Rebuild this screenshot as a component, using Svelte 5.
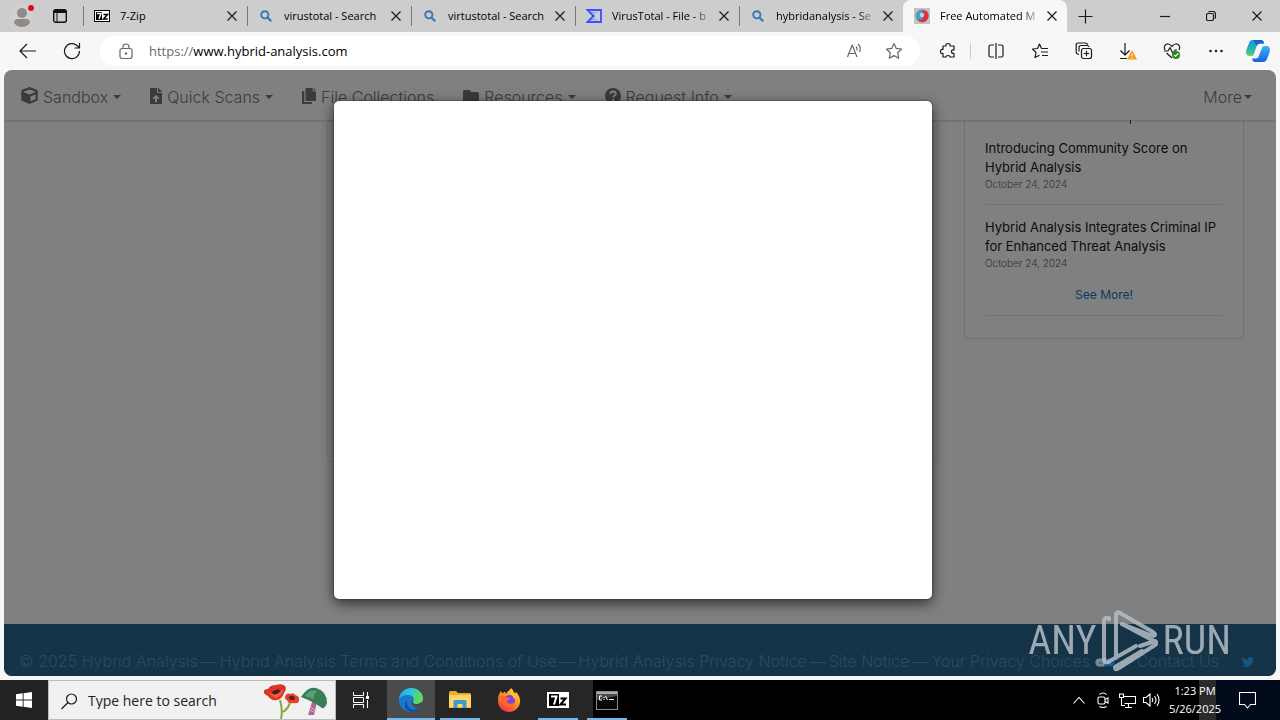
<script>
  const tabs = [
    { icon: 'zip', title: '7-Zip' },
    { icon: 'search', title: 'virustotal - Search' },
    { icon: 'search', title: 'virtustotal - Search' },
    { icon: 'vt', title: 'VirusTotal - File - b', fade: true },
    { icon: 'search', title: 'hybridanalysis - Se', fade: true },
    { icon: 'ha', title: 'Free Automated M', fade: true, active: true }
  ];

  const menu = [
    { icon: 'cube', label: 'Sandbox', caret: true },
    { icon: 'upload', label: 'Quick Scans', caret: true },
    { icon: 'copy', label: 'File Collections' },
    { icon: 'folder', label: 'Resources', caret: true },
    { icon: 'help', label: 'Request Info', caret: true }
  ];

  const posts = [
    { title: 'Introducing Community Score on Hybrid Analysis', date: 'October 24, 2024' },
    { title: 'Hybrid Analysis Integrates Criminal IP for Enhanced Threat Analysis', date: 'October 24, 2024' }
  ];

  const links = [
    'Hybrid Analysis Terms and Conditions of Use',
    'Hybrid Analysis Privacy Notice',
    'Site Notice'
  ];

  const tools = [
    { icon: 'split', label: 'Split screen' },
    { icon: 'favs', label: 'Favorites' },
    { icon: 'collect', label: 'Collections' },
    { icon: 'download', label: 'Downloads' },
    { icon: 'heart', label: 'Browser essentials' },
    { icon: 'dots', label: 'Settings and more' },
    { icon: 'copilot', label: 'Copilot' }
  ];

  const apps = [
    { icon: 'edge', label: 'Microsoft Edge', state: 'current' },
    { icon: 'explorer', label: 'File Explorer', state: 'open' },
    { icon: 'firefox', label: 'Firefox', state: '' },
    { icon: 'seven', label: '7-Zip', state: 'open' },
    { icon: 'cmd', label: 'Command Prompt', state: 'open' }
  ];

  let query = $state('');
  let address = $state('www.hybrid-analysis.com');
</script>

{#snippet glyph(name)}
  {#if name === 'zip'}
    <svg width="16" height="12" viewBox="0 0 16 12"><rect width="16" height="12" fill="#000" /><rect x="1" y="1" width="14" height="10" fill="#fff" /><rect x="2" y="2" width="6" height="8" fill="#000" /><path d="M3 3.500h4L5 9" fill="none" stroke="#fff" stroke-width="1.400" /><path d="M9.500 4.500h4l-4 4.500h4.200" fill="none" stroke="#000" stroke-width="1.500" /></svg>
  {:else if name === 'search'}
    <svg width="14" height="14" viewBox="0 0 14 14" fill="none" stroke="#3b76b4" stroke-width="1.900"><circle cx="5.800" cy="5.800" r="3.600" /><path d="M8.500 8.500l3.700 3.700" stroke-width="2.200" /></svg>
  {:else if name === 'vt'}
    <svg width="16" height="16" viewBox="0 0 16 16" fill="none" stroke="#394eff" stroke-width="1.800"><path d="M1.500 2H15v12H1.500L7.500 8z" /><path d="M5 4.500h6M5 11.500h6M5.500 5 9 8l-3.500 3" stroke-width="1" opacity=".4" /></svg>
  {:else if name === 'ha'}
    <svg width="16" height="16" viewBox="0 0 16 16"><rect width="16" height="16" fill="#c6c2c2" /><circle cx="8" cy="8" r="6.500" fill="#5299c4" /><path d="M8 2.500c5-1 7.500 3 6.300 7C12.500 15 6 15.500 4 11.500c4 1.500 7-1 4-9z" fill="#e52d3c" /><circle cx="8" cy="7" r="2.200" fill="#a8dcf4" /></svg>
  {:else if name === 'cube'}
    <svg width="17" height="17" viewBox="0 0 512 512" fill="currentColor"><path d="M239 6 32 84c-14 5-24 19-24 34v264c0 15 9 28 22 34l208 90c11 5 25 5 36 0l208-90c13-6 22-19 22-34V118c0-15-10-29-24-34L273 6c-11-4-23-4-34 0zm17 68 184 69v8l-184 78L72 151v-8zm32 354V286l152-66v142z" fill-rule="evenodd" /></svg>
  {:else if name === 'upload'}
    <svg width="12" height="16" viewBox="0 0 384 512" fill="currentColor"><path fill-rule="evenodd" d="M224 136V0H24C11 0 0 11 0 24v464c0 13 11 24 24 24h336c13 0 24-11 24-24V160H248c-13 0-24-11-24-24zm65 208h-65v104h-64V344H95c-14 0-21-17-11-27l108-105 108 105c10 10 3 27-11 27zM377 105 279 7c-5-5-11-7-17-7h-6v128h128v-6c0-6-2-12-7-17z" /></svg>
  {:else if name === 'copy'}
    <svg width="14" height="16" viewBox="0 0 448 512" fill="currentColor"><path fill-rule="evenodd" d="M320 448v40c0 13-11 24-24 24H24c-13 0-24-11-24-24V120c0-13 11-24 24-24h50v352zM344 0v104h104v288c0 13-11 24-24 24H136c-13 0-24-11-24-24V24c0-13 11-24 24-24zM376 0l72 72h-72z" /></svg>
  {:else if name === 'folder'}
    <svg width="16" height="16" viewBox="0 0 16 16" fill="currentColor"><path d="M1.500 2h5l2 2h6A1.500 1.500 0 0 1 16 5.500v7a1.500 1.500 0 0 1-1.500 1.500h-13A1.500 1.500 0 0 1 0 12.500v-9A1.500 1.500 0 0 1 1.500 2z" /></svg>
  {:else if name === 'help'}
    <svg width="16" height="16" viewBox="0 0 16 16"><circle cx="8" cy="8" r="8" fill="currentColor" /><path d="M5.400 6C5.600 4 7 3.500 8.100 3.500c1.400 0 2.700.9 2.700 2.200C10.800 7.500 8.200 7.600 8.200 9.400" fill="none" stroke="#808080" stroke-width="1.800" /><circle cx="8.200" cy="12" r="1.200" fill="#808080" /></svg>
  {:else if name === 'split'}
    <svg width="18" height="18" viewBox="0 0 18 18" class="line"><path d="M7 3H3.500Q2 3 2 4.500v9Q2 15 3.500 15H7M11 3h3.500Q16 3 16 4.500v9q0 1.500-1.500 1.500H11M9 1v16" /></svg>
  {:else if name === 'favs'}
    <svg width="18" height="18" viewBox="0 0 18 18" class="line"><path d="M10.500 6.500 8.500 2l-2 4.500-5 .5L5 10.500 4 15.500l4.500-2.300M10.500 6.500H17M10 10h7M11 13.500h6" /></svg>
  {:else if name === 'collect'}
    <svg width="18" height="18" viewBox="0 0 18 18" class="line"><path d="M4 12.500 2.700 12Q1 11.500 1.200 10V3q0-2 2-2h7q2 0 2.400 2M4 9.500V5.500q0-2 2-2h5.500q2 0 2.500 1.500" /><rect x="6.500" y="6.500" width="10" height="10" rx="2" /><path d="M11.500 8.700v5.600M8.700 11.500h5.600" /></svg>
  {:else if name === 'download'}
    <svg width="18" height="18" viewBox="0 0 18 18"><path class="line" d="M6 1v12M1.500 8.500 6 13l4.500-4.500M1 16.500h7" /><path d="m13 8 5 9.500H8z" fill="#f7981d" /><path d="M13 11.500v3M13 15.500v1" stroke="#fff" /></svg>
  {:else if name === 'heart'}
    <svg width="18" height="18" viewBox="0 0 18 18"><path class="line" d="M2 8C0 4 3 1.500 5.500 2 7.500 2.200 8.500 4 9 4.500 9.500 4 10.500 2.200 12.500 2 15 1.500 18 4 16 8M1 9h4l2-3.500 3 6L12 8h2M3.500 11l5.500 5" /><circle cx="13" cy="13" r="4" fill="#218a21" /><path d="m11 13 1.500 1.500 2.700-3" fill="none" stroke="#fff" stroke-width="1.200" /></svg>
  {:else if name === 'dots'}
    <svg width="18" height="18" viewBox="0 0 18 18" fill="#222"><circle cx="3.500" cy="9" r="1.300" /><circle cx="9" cy="9" r="1.300" /><circle cx="14.500" cy="9" r="1.300" /></svg>
  {:else if name === 'copilot'}
    <svg width="24" height="24" viewBox="0 0 24 24">
      <defs>
        <linearGradient id="cpa" x1="0" y1="0" x2="0" y2="1"><stop offset="0" stop-color="#1593e8" /><stop offset=".6" stop-color="#28b7b6" /><stop offset="1" stop-color="#5fd06a" /></linearGradient>
        <linearGradient id="cpb" x1="0" y1="1" x2="0" y2="0"><stop offset="0" stop-color="#1c61e2" /><stop offset="1" stop-color="#35b4f4" /></linearGradient>
      </defs>
      <path d="M7 1h8c2 0 2.500 1.500 3 3.500h-4c-2 0-3 1-3.500 3L8 15c-.6 2-2 2-4 2-4 0-4.500-3-3.500-6.500L3 4c.6-2 2-3 4-3z" fill="url(#cpa)" />
      <path d="M17 23H9c-2 0-2.500-1.500-3-3.500h3.500c2 0 3-1 3.500-3L16 9c.6-2 2-2 4-2 4 0 4.500 3 3.500 6.500L21 20c-.6 2-2 3-4 3z" fill="url(#cpb)" />
      <path d="M7 1h8c2 0 2.500 1.500 3 3.500h-4c-2 0-2.500 1-3 2.500z" fill="#1666ce" />
    </svg>
  {:else if name === 'edge'}
    <svg width="26" height="26" viewBox="0 0 26 26">
      <defs><linearGradient id="eda" x1="0" y1="0" x2="1" y2=".3"><stop offset="0" stop-color="#20a7e8" /><stop offset=".5" stop-color="#2fc6d8" /><stop offset="1" stop-color="#62d957" /></linearGradient></defs>
      <circle cx="13" cy="13" r="12" fill="#1879cf" />
      <path d="M1 12C2 5 7 1 13 1c7 0 12 5 12 10 0 4-3 6-6.500 6-3 0-4.500-1.200-3.500-2.500 2-3 0-6-4-6.500C7 7.500 3 9 1 12z" fill="url(#eda)" />
      <path d="M9.500 12.500c-2 5 1 10 7 10 2.500 0 5-1 6.500-2.500-2 3.500-6 5.500-10 5-6-1-8.500-8-3.500-12.500z" fill="#124f9d" />
      <path d="M15 14.500c-1 1.300.5 2.500 3.500 2.500 2.500 0 4.500-1 5.600-2.500l1.900 1-2 5q-3 1.500-6 .5c-4-1-5.500-5-4-7.500.8-.3 1.600 0 1 1z" fill="#4b4b4b" />
    </svg>
  {:else if name === 'explorer'}
    <svg width="22" height="20" viewBox="0 0 22 20"><path d="M0 2.500Q0 1 1.500 1H7l2 2h11.500Q22 3 22 4.500V18H0z" fill="#e9ac2c" /><path d="M0 5h22v12.500H0z" fill="#ffd666" /><path d="M4.500 18v-6.500Q4.500 10 6 10h10q1.500 0 1.500 1.500V18h-4v-4h-5v4z" fill="#3f9ad8" /></svg>
  {:else if name === 'firefox'}
    <svg width="24" height="24" viewBox="0 0 24 24">
      <defs><linearGradient id="ffa" x1=".8" y1="0" x2=".2" y2="1"><stop offset="0" stop-color="#ffe13d" /><stop offset=".5" stop-color="#ff8a23" /><stop offset="1" stop-color="#f2264f" /></linearGradient></defs>
      <path d="M2 6.500 4 3l1.500 2.500L8 3.500 9 6c1-2.500 4-3.500 5-6 2 1.500 2.500 4 4 5.500l1-1.500c3 3 4.500 6.500 4 10.500-.7 5.500-5.500 9.500-11 9.500S1 19.500 1 13.500c0-2.500 0-5 1-7z" fill="url(#ffa)" />
      <circle cx="12.500" cy="12.500" r="5.500" fill="#7542e5" />
      <path d="M3 8c3-1 5 0 6.500 1.500l4 .5c-1 2-3.500 1.500-3.500 3.500 1 3 6 3 8 0-1 4.500-4 6-7 5.500C6 18 4 14 3 8z" fill="#ff6731" />
      <path d="M13 5c3 0 5 2 5.500 5l-2 .5C16 8 15 6.500 13 5z" fill="#ffc432" />
    </svg>
  {:else if name === 'seven'}
    <svg width="22" height="16" viewBox="0 0 22 16"><rect width="22" height="16" fill="#fff" /><rect x="2" y="2" width="10" height="12" fill="#000" /><path d="M4 4.500h5.500L7 12.500" fill="none" stroke="#fff" stroke-width="2" /><path d="M13.500 6.500h5l-5 6h5.500" fill="none" stroke="#000" stroke-width="2" /></svg>
  {:else if name === 'cmd'}
    <svg width="22" height="19" viewBox="0 0 22 19"><rect x=".5" y=".5" width="21" height="18" fill="#070707" stroke="#8a8a8a" /><path d="M1 1h20v4L1 9z" fill="#4a4a4a" /><path d="M1 2h20" stroke="#ccc" stroke-width="1.500" /><path d="M6 5H3.500v4H6M8 6v1M8 8v1M9.500 5l2 4M13 8.500h5" fill="none" stroke="#fff" /></svg>
  {/if}
{/snippet}

{#snippet cross()}
  <svg width="10" height="10" viewBox="0 0 10 10" class="line"><path d="m.5.5 9 9m0-9-9 9" /></svg>
{/snippet}

<div class="desktop">
  <header class="tabbar">
    <div class="lead">
      <button class="plain" aria-label="Profile">
        <svg width="28" height="28" viewBox="0 0 28 28"><circle cx="14" cy="14" r="12" fill="#d2d0ce" /><circle cx="14" cy="11" r="5" fill="#8f8b88" /><path d="M6 21q0-4 4-4h8q4 0 4 4-3 4-8 4t-8-4z" fill="#8f8b88" /><circle cx="23" cy="6" r="3" fill="#e00b1c" /></svg>
      </button>
      <button class="plain" aria-label="Tab actions">
        <svg width="14" height="14" viewBox="0 0 14 14"><rect x=".7" y=".7" width="12.600" height="12.600" rx="2" fill="none" stroke="#111" stroke-width="1.400" /><path d="M1 1h12v3H1z" fill="#111" /><path d="M4 4v9" stroke="#111" /></svg>
      </button>
    </div>
    {#each tabs as tab}
      <div class="tab" class:active={tab.active}>
        <span class="favicon">{@render glyph(tab.icon)}</span>
        <span class="title" class:fade={tab.fade}>{tab.title}</span>
        <button class="plain close" aria-label="Close tab">{@render cross()}</button>
      </div>
    {/each}
    <button class="plain new" aria-label="New tab">
      <svg width="15" height="15" viewBox="0 0 15 15" class="line"><path d="M7.500.5v14M.5 7.500h14" /></svg>
    </button>
    <div class="window">
      <button class="plain" aria-label="Minimize"><svg width="10" height="10" viewBox="0 0 10 10" class="line"><path d="M0 5.500h10" /></svg></button>
      <button class="plain" aria-label="Restore"><svg width="10" height="10" viewBox="0 0 10 10" class="line"><rect x=".5" y="2.500" width="7" height="7" rx="1.500" /><path d="M2.500 1Q3 .5 4 .5h3Q9.500.5 9.500 3v3q0 1-.8 1.500" /></svg></button>
      <button class="plain" aria-label="Close">{@render cross()}</button>
    </div>
  </header>

  <div class="toolbar">
    <button class="plain tool" aria-label="Back"><svg width="18" height="16" viewBox="0 0 18 16" class="line"><path d="M8 1 1 8l7 7M1 8h16" /></svg></button>
    <button class="plain tool" aria-label="Refresh"><svg width="18" height="18" viewBox="0 0 18 18" class="line"><path d="M16.500 9A7.500 7.500 0 1 1 14 3.500L16 5.500M16.500 1v5h-5" /></svg></button>
    <div class="address">
      <button class="plain lock" aria-label="Site information">
        <svg width="14" height="16" viewBox="0 0 14 16" class="line grey"><rect x="1" y="5.500" width="12" height="10" rx="2" /><path d="M4 5.500V4q0-3 3-3t3 3v1.500" /><circle cx="7" cy="10.500" r=".6" /></svg>
      </button>
      <label for="url">https://</label><input id="url" bind:value={address} spellcheck="false" />
      <button class="plain in" aria-label="Read aloud"><svg width="17" height="16" viewBox="0 0 17 16" class="line grey"><path d="m1.500 14 4.700-12L11 14M3 10.500h6.600M10 3.500q1.500 1.500 1 4M12 1q3.500 3 1.500 8" /></svg></button>
      <button class="plain in" aria-label="Add to favorites"><svg width="18" height="18" viewBox="0 0 18 18" class="line grey"><path d="m9 1.500 2.300 4.900 5.300.7-3.900 3.700 1 5.400L9 13.600l-4.700 2.600 1-5.400L1.400 7.100l5.300-.7z" /></svg></button>
    </div>
    <button class="plain tool" aria-label="Extensions"><svg width="18" height="18" viewBox="0 0 18 18" class="line"><path d="M4 4h3q-.5-2.500 2-2.500T11 4h4v4q-2.500-.5-2.500 1.500T15 11.500V15h-4q0-1.500-2-1.500T7 15H4v-3.500Q1.500 12 1.500 9.500T4 7.500z" /></svg></button>
    <span class="rule"></span>
    {#each tools as tool}
      <button class="plain tool" aria-label={tool.label}>{@render glyph(tool.icon)}</button>
    {/each}
  </div>

  <div class="page">
    <nav>
      {#each menu as item}
        <a href="#{item.icon}">
          {@render glyph(item.icon)}<span>{item.label}</span>{#if item.caret}<i class="caret"></i>{/if}
        </a>
      {/each}
      <a class="more" href="#more">More<i class="caret"></i></a>
    </nav>

    <main>
      <section class="panel"></section>
      <aside>
        <span class="descender"></span>
        {#each posts as post}
          <article>
            <h2>{post.title}</h2>
            <time>{post.date}</time>
          </article>
        {/each}
        <a class="see" href="#blog">See More!</a>
      </aside>
    </main>

    <footer>
      <span>© 2025 Hybrid Analysis</span>
      {#each links as link}
        <span>—</span><a href="#legal">{link}</a>
      {/each}
      <span>—</span>
      <a href="#choices">Your Privacy Choices <svg width="20" height="9" viewBox="0 0 20 9"><rect x=".5" y=".5" width="19" height="8" rx="4" fill="#164da0" /><path d="M4.500.5H12L9 8.500H4.500a4 4 0 0 1 0-8z" fill="#7d878e" /><path d="m4 4.500 1.500 1.500L8 3" fill="none" stroke="#164da0" /><path d="m12 2.500 4 4m0-4-4 4" stroke="#8d989f" /></svg></a>
      <span>—</span>
      <a href="#contact">Contact Us</a>
      <a class="bird" href="#twitter" aria-label="Twitter"><svg width="12" height="10" viewBox="0 0 24 20" fill="#14587f"><path d="M24 2.400a10 10 0 0 1-2.800.8A5 5 0 0 0 23.300.5a10 10 0 0 1-3.100 1.200 4.900 4.900 0 0 0-8.400 4.500A14 14 0 0 1 1.700 1a4.900 4.900 0 0 0 1.500 6.600A5 5 0 0 1 1 7a4.900 4.900 0 0 0 3.900 4.900 5 5 0 0 1-2.200.1 4.900 4.900 0 0 0 4.600 3.400A10 10 0 0 1 0 17.500 14 14 0 0 0 21.500 5z" /></svg></a>
    </footer>

    <div class="overlay">
      <div class="modal" role="dialog" aria-label="Dialog"></div>
    </div>

    <div class="watermark">
      <span>ANY</span>
      <svg width="56" height="62" viewBox="0 0 56 62" fill="none" stroke="#b4bec5" stroke-width="4" stroke-linejoin="round" stroke-linecap="round"><path d="M7 9.500V8Q2 7 2 11v39q0 3 4 2l28-16" /><path d="M14 48V5q0-4 4-2l33 19q4 3 0 4L20 14" /><path d="m38 36 15-5q3 2 0 4L17 58q-4 3-4-1l27-16M20 14l32 17" /></svg>
      <span>RUN</span>
    </div>
  </div>

  <div class="taskbar">
    <button class="plain start" aria-label="Start"><svg width="16" height="16" viewBox="0 0 16 16" fill="#fff"><path d="M0 2.200 6.700 1.300v6.200H0zM7.600 1.200 16 0v7.500H7.600zM0 8.400h6.700v6.300L0 13.800zM7.600 8.400H16V16l-8.400-1.200z" /></svg></button>
    <div class="search">
      <svg width="17" height="17" viewBox="0 0 17 17" class="line"><circle cx="10.500" cy="6" r="5" /><path d="M7 9.500.5 16" /></svg>
      <input bind:value={query} placeholder="Type here to search" aria-label="Type here to search" />
      <svg width="66" height="36" viewBox="0 0 66 36">
        <path d="M18 36q2-9-1-19M20 29q6-4 7-10" fill="none" stroke="#83a83b" stroke-width="2" />
        <path d="M1 10Q0 6 5 6q2-4 8-4 6-2 9 1 2 3-1 7-2 6-7 7-6 1-9-4-3-1-4-3z" fill="#dc3426" />
        <path d="M4 9q8 5 17-3-3 9-9 9z" fill="#f75a43" /><ellipse cx="13" cy="9" rx="4" ry="2" fill="#4e1d20" transform="rotate(-18 13 9)" />
        <path d="M22 14q1-5 6-3 3-2 4 1 5 1 4 5 0 4-5 3-6 1-7-3-2 0-2-3z" fill="#e83f2b" /><ellipse cx="29" cy="15" rx="3" ry="2" fill="#5c2023" transform="rotate(15 29 15)" />
        <path d="M49 19h5l-3 13h-6z" fill="#b5658d" /><path d="m47 24 5 3m-6 0 5 2" stroke="#e5b2c8" />
        <path d="M38 14Q45 3 53 5q11 3 11 15-2 6-5 5-8-6-21-11z" fill="#397f55" /><path d="M42 13q5-7 12-5-4 3-3 8z" fill="#5aa173" />
      </svg>
    </div>
    <div class="apps">
      <button class="plain view" aria-label="Task view"><svg width="18" height="18" viewBox="0 0 18 18" fill="none" stroke="#fff"><path d="M1.500 1v3.500h10V1M1.500 17v-3.500h10V17M1.500 6.500h10v5h-10zM15.500 1v4M15.500 9v8" /><path d="M14 5h3v3h-3z" fill="#fff" stroke="none" /></svg></button>
      {#each apps as app}
        <button class="plain app {app.state}" aria-label={app.label}>{@render glyph(app.icon)}</button>
      {/each}
    </div>
    <div class="tray">
      <button class="plain" aria-label="Show hidden icons"><svg width="12" height="7" viewBox="0 0 12 7"><path d="m.5 6.500 5.500-6 5.500 6" /></svg></button>
      <button class="plain" aria-label="Meet now"><svg width="12" height="16" viewBox="0 0 12 16"><rect x="1" y="5" width="7" height="7" rx="1.500" /><path d="m8 7.500 3-1.500v5L8 9.500M2.500 2.500Q6-.5 9.500 2.500M2.500 14.500q3.500 2 7 0" /></svg></button>
      <button class="plain" aria-label="Network"><svg width="17" height="15" viewBox="0 0 17 15"><path d="M5 3.500h11.500v7H5.500M9.500 11v3M6 14.500h7M.5 1h4v3.500h-4zM2.500 4.500v8H6" /></svg></button>
      <button class="plain" aria-label="Volume"><svg width="17" height="14" viewBox="0 0 17 14"><path d="M.5 4.500H3l4-3.500v12L3 9.500H.5zM9 5q1.500 2 0 4M11.500 3q3 4 0 8M14 1q4 6 0 12" /></svg></button>
    </div>
    <button class="plain clock"><span>1:23 PM</span><span>5/26/2025</span></button>
    <button class="plain notes" aria-label="Notifications"><svg width="17" height="17" viewBox="0 0 17 17"><path d="M.5.5h16v12h-5L8.500 16l-3-3.500h-5z" /></svg></button>
  </div>
</div>

<style>
  :global(body) {
    margin: 0;
  }
  .desktop {
    display: flex;
    flex-direction: column;
    min-height: 100vh;
    background: #f7f7f7;
    color: #000;
    font: 11px/16px "Open Sans", "Noto Sans", sans-serif;
  }
  .plain {
    display: flex;
    align-items: center;
    justify-content: center;
    padding: 0;
    border: 0;
    background: none;
    color: inherit;
    font: inherit;
  }
  svg {
    display: block;
    flex: none;
  }
  .line {
    fill: none;
    stroke: #1b1b1b;
    stroke-width: 1.2;
    stroke-linejoin: round;
  }
  .grey {
    stroke: #666;
  }
  input {
    min-width: 0;
    padding: 0;
    border: 0;
    outline: 0;
    background: none;
    color: inherit;
    font: inherit;
  }

  .tabbar {
    display: flex;
    height: 32px;
    background: #cdcdcd;
  }
  .lead {
    display: flex;
    align-items: center;
    gap: 17px;
    flex: 0 0 75px;
    padding-left: 8px;
  }
  .tab {
    display: flex;
    align-items: center;
    flex: 0 1 164px;
    min-width: 0;
    box-sizing: border-box;
    padding: 0 10px 0 11px;
    background: linear-gradient(#777, #777) left center / 1px 20px no-repeat;
  }
  .tab.active {
    border-radius: 8px 8px 0 0;
    background: #f7f7f7;
  }
  .favicon {
    display: flex;
    justify-content: center;
    flex: 0 0 16px;
  }
  .title {
    flex: 1;
    min-width: 0;
    margin-left: 10px;
    overflow: hidden;
    white-space: nowrap;
  }
  .title.fade {
    -webkit-mask-image: linear-gradient(90deg, #000 80%, transparent);
    mask-image: linear-gradient(90deg, #000 80%, transparent);
  }
  .close {
    width: 10px;
    margin-left: 6px;
  }
  .new {
    width: 36px;
  }
  .window {
    display: flex;
    margin-left: auto;
  }
  .window button {
    width: 46px;
  }

  .toolbar {
    display: flex;
    align-items: center;
    height: 38px;
    padding-left: 6px;
  }
  .tool {
    flex: 0 0 44px;
    height: 32px;
  }
  .tool:last-child {
    flex-basis: 42px;
    padding-right: 2px;
  }
  .address {
    display: flex;
    align-items: center;
    flex: 1;
    height: 30px;
    margin: 0 6px;
    border-radius: 15px;
    background: #fff;
    font-size: 13px;
  }
  .lock {
    width: 49px;
    padding-left: 2px;
  }
  .address label {
    color: #6b6b6b;
  }
  .address input {
    flex: 1;
  }
  .in {
    width: 40px;
  }
  .in:last-child {
    margin-right: 6px;
  }
  .rule {
    width: 1px;
    height: 16px;
    margin-right: 3px;
    background: #ccc;
  }

  .page {
    position: relative;
    display: flex;
    flex-direction: column;
    flex: 1;
    margin: 0 4px 4px;
    overflow: hidden;
    border-radius: 8px;
    background: #808080;
    font-family: Inter, sans-serif;
    font-weight: 300;
  }
  .page a {
    color: inherit;
    text-decoration: none;
  }
  nav {
    display: flex;
    align-items: center;
    gap: 29px;
    height: 50px;
    padding: 0 24px 0 17px;
    box-sizing: border-box;
    box-shadow: 0 1px 2px rgba(0, 0, 0, 0.2);
    color: #3b3b3b;
    font-size: 16px;
    line-height: 24px;
    white-space: nowrap;
  }
  nav a {
    display: flex;
    align-items: center;
    gap: 5px;
    padding-top: 3px;
  }
  nav a svg {
    margin-bottom: 2px;
  }
  .caret {
    border: 4px solid transparent;
    border-top-color: #3b3b3b;
    border-bottom: 0;
  }
  nav .more {
    gap: 2px;
    margin-left: auto;
  }
  main {
    display: flex;
    align-items: flex-start;
    flex: 1;
    gap: 26px;
    padding: 0 32px 0 323px;
  }
  .panel {
    flex: 1;
    height: 341px;
    border: 1px solid #767676;
    border-top: 0;
    border-radius: 0 0 4px 4px;
  }
  aside {
    display: flex;
    flex-direction: column;
    flex: 0 0 280px;
    box-sizing: border-box;
    padding: 0 20px 22px;
    border: 1px solid #707070;
    border-top: 0;
    border-radius: 0 0 4px 4px;
  }
  .descender {
    width: 1px;
    height: 4px;
    margin: 0 0 15px 145px;
    background: #222;
  }
  article {
    display: flex;
    flex-direction: column;
    padding-bottom: 12px;
    margin-bottom: 13px;
    border-bottom: 1px solid #757575;
  }
  article + article {
    padding-bottom: 0;
    margin-bottom: 16px;
    border-bottom: 0;
  }
  h2 {
    margin: 0;
    color: #0c0c0c;
    font-size: 13px;
    font-weight: 400;
    line-height: 19px;
  }
  time {
    color: #333;
    font-size: 10px;
    line-height: 15px;
  }
  .page .see {
    padding-bottom: 12px;
    border-bottom: 1px solid #757575;
    color: #0c3864;
    font-size: 12px;
    font-weight: 400;
    text-align: center;
  }
  footer {
    display: flex;
    align-items: center;
    gap: 3px;
    height: 52px;
    box-sizing: border-box;
    padding: 22px 22px 0 15px;
    background: #163447;
    color: #254d66;
    font-size: 16px;
    line-height: 24px;
    white-space: nowrap;
  }
  footer a svg {
    display: inline-block;
  }
  footer .bird {
    margin-left: auto;
  }
  .overlay {
    position: absolute;
    inset: 0;
    display: flex;
    justify-content: center;
    padding: 31px 14px 77px 0;
  }
  .modal {
    flex: 0 1 598px;
    border-radius: 5px;
    background: #fff;
    box-shadow: 0 4px 14px rgba(0, 0, 0, 0.65), 0 0 2px rgba(0, 0, 0, 0.5);
  }
  .watermark {
    position: absolute;
    right: 45px;
    bottom: 4px;
    display: flex;
    align-items: center;
    gap: 5px;
    opacity: 0.85;
    color: #b4bec5;
    font: 400 40px/62px "Roboto Condensed", "Open Sans Condensed", "Liberation Sans Narrow", sans-serif;
  }

  .taskbar {
    display: flex;
    height: 40px;
    background: #000;
    color: #fff;
  }
  .start {
    width: 48px;
    background: #222;
  }
  .search {
    display: flex;
    align-items: center;
    flex: 0 0 288px;
    min-width: 0;
    box-sizing: border-box;
    padding: 2px 6px 0 12px;
    border: 1px solid #bbb;
    background: #f1f1f1;
    color: #222;
    font-size: 14px;
  }
  .search input {
    flex: 1;
    width: 0;
    margin-left: 10px;
  }
  .search input::placeholder {
    color: #222;
    opacity: 1;
  }
  .apps {
    display: flex;
    gap: 1px;
    background: linear-gradient(90deg, #262626 257px, #000 257px);
  }
  .view {
    width: 50px;
  }
  .app {
    width: 48px;
    background: linear-gradient(#76b9ed, #76b9ed) center bottom / 0 2px no-repeat;
  }
  .app.open {
    background-size: 40px 2px;
  }
  .app.current {
    background-color: #4b4b4b;
    background-size: 48px 2px;
  }
  .tray {
    display: flex;
    margin-left: auto;
  }
  .tray button {
    width: 24px;
  }
  .tray svg,
  .notes svg {
    fill: none;
    stroke: #fff;
    stroke-width: 1.1;
  }
  .clock {
    flex-direction: column;
    gap: 2px;
    width: 64px;
    background: linear-gradient(90deg, transparent 36px, #2b2b2b 36px 53px, #020b1c 53px);
  }
  .notes {
    width: 53px;
    padding-right: 13px;
    background: #020b1c;
  }
</style>
